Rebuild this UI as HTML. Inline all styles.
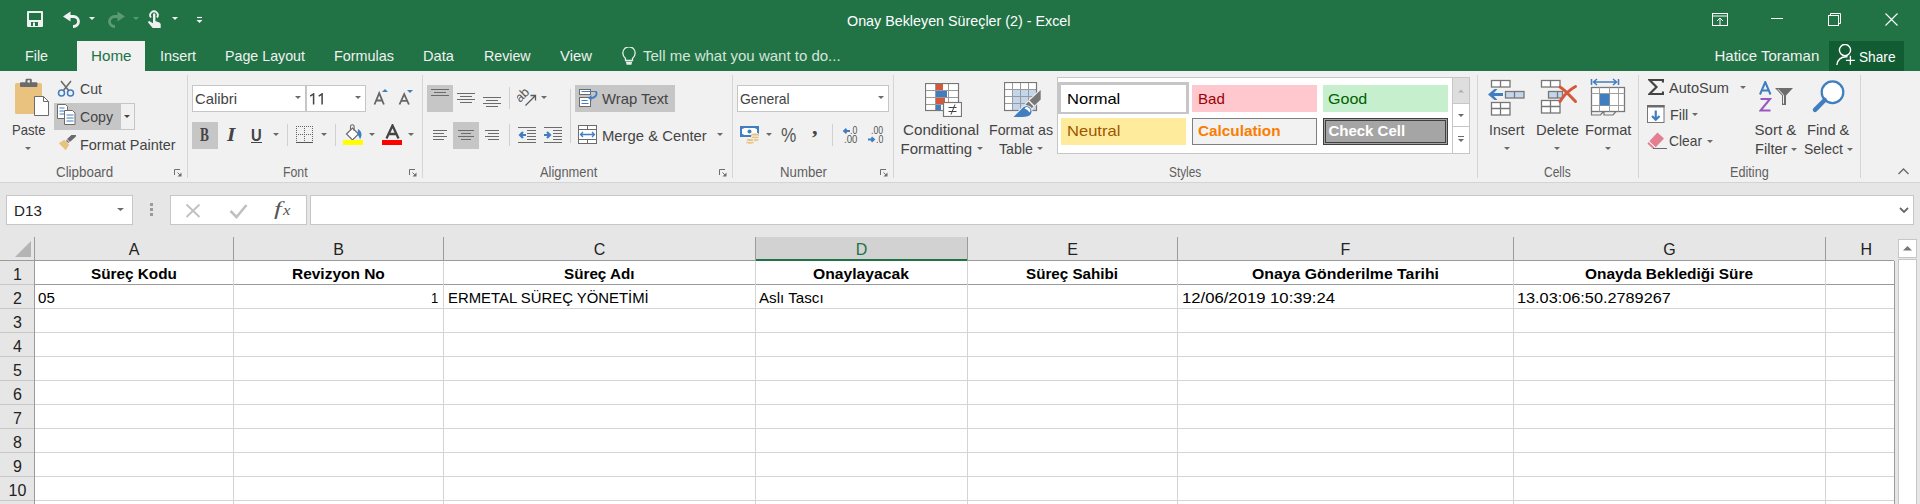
<!DOCTYPE html>
<html><head><meta charset="utf-8"><style>
html,body{margin:0;padding:0}
body{width:1920px;height:504px;overflow:hidden;position:relative;background:#e6e6e6;font-family:"Liberation Sans",sans-serif}
.t{position:absolute;white-space:nowrap;line-height:1;transform-origin:0 0}
.r{position:absolute;display:block}
</style></head><body>
<div class="r" style="left:0px;top:0px;width:1920px;height:71px;background:#217346;"></div>
<svg class="r" style="left:27px;top:11px" width="16" height="16" viewBox="0 0 16 16"><rect x="0" y="0" width="16" height="16" rx="1" fill="#f0f0f0"/><rect x="2" y="2" width="12" height="7" fill="#217346"/><rect x="4" y="11" width="7" height="4" fill="#217346"/><rect x="6" y="11.5" width="2" height="3.5" fill="#f0f0f0"/></svg>
<svg class="r" style="left:62px;top:11px" width="20" height="17" viewBox="0 0 20 17"><path d="M4 5.5h7.5a5 5 0 0 1 0 10h-0.5" fill="none" stroke="#f0f0f0" stroke-width="2.8"/><path d="M1 5.5L8.5 0.5V10.5z" fill="#f0f0f0"/></svg>
<svg class="r" style="left:89px;top:17px" width="6" height="3" viewBox="0 0 6 3"><path d="M0 0h6l-3.0 3z" fill="#f3f3f3"/></svg>
<svg class="r" style="left:106px;top:11px" width="20" height="17" viewBox="0 0 20 17"><path d="M16 5.5H8.5a5 5 0 0 0 0 10h0.5" fill="none" stroke="#5a9a74" stroke-width="2.8"/><path d="M19 5.5L11.5 0.5V10.5z" fill="#5a9a74"/></svg>
<svg class="r" style="left:133px;top:17px" width="6" height="3" viewBox="0 0 6 3"><path d="M0 0h6l-3.0 3z" fill="#5a9a74"/></svg>
<svg class="r" style="left:147px;top:8px" width="15" height="20" viewBox="0 0 15 20"><path d="M4 9.5a3.8 3.8 0 1 1 6 0" fill="none" stroke="#f0f0f0" stroke-width="1.8"/><path d="M6 6.5a1.2 1.2 0 0 1 2.4 0v6.5l4.5 1.8 0.8 1.5v3.7h-8l-5-6 1.5-1 3.8 2.2z" fill="#f0f0f0"/></svg>
<svg class="r" style="left:172px;top:17px" width="6" height="3" viewBox="0 0 6 3"><path d="M0 0h6l-3.0 3z" fill="#f3f3f3"/></svg>
<svg class="r" style="left:196px;top:16px" width="7" height="7" viewBox="0 0 7 7"><path d="M1 1.5h5" stroke="#f3f3f3" stroke-width="1.2"/><path d="M0.5 4h6l-3 3z" fill="#f3f3f3"/></svg>
<div class="t" style="left:847.00px;top:13.00px;font-size:15px;color:#ffffff;transform:scaleX(0.9541);">Onay Bekleyen Süreçler (2) - Excel</div>
<svg class="r" style="left:1712px;top:13px" width="16" height="13" viewBox="0 0 16 13"><rect x="0.5" y="0.5" width="15" height="12" fill="none" stroke="#fff"/><path d="M0.5 3h15" stroke="#fff"/><path d="M8 12.5V5M5 8l3-3 3 3" fill="none" stroke="#fff"/></svg>
<div class="r" style="left:1771px;top:18px;width:12px;height:1px;background:#fff;"></div>
<svg class="r" style="left:1828px;top:13px" width="13" height="13" viewBox="0 0 13 13"><rect x="0.5" y="2.5" width="10" height="10" fill="none" stroke="#fff"/><path d="M2.5 2.5v-2h10v10h-2" fill="none" stroke="#fff"/></svg>
<svg class="r" style="left:1885px;top:13px" width="13" height="13" viewBox="0 0 13 13"><path d="M0.5 0.5l12 12M12.5 0.5l-12 12" stroke="#fff" stroke-width="1.1"/></svg>
<div class="r" style="left:77px;top:41px;width:68px;height:30px;background:#f1f1f1;"></div>
<div class="t" style="left:25.00px;top:48.00px;font-size:15px;color:#f1f1f1;transform:scaleX(0.9524);">File</div>
<div class="t" style="left:90.50px;top:48.00px;font-size:15px;color:#217346;transform:scaleX(1.0125);">Home</div>
<div class="t" style="left:160.00px;top:48.00px;font-size:15px;color:#f1f1f1;transform:scaleX(0.9600);">Insert</div>
<div class="t" style="left:225.00px;top:48.00px;font-size:15px;color:#f1f1f1;transform:scaleX(0.9496);">Page Layout</div>
<div class="t" style="left:334.20px;top:48.00px;font-size:15px;color:#f1f1f1;transform:scaleX(0.9600);">Formulas</div>
<div class="t" style="left:423.30px;top:48.00px;font-size:15px;color:#f1f1f1;transform:scaleX(0.9748);">Data</div>
<div class="t" style="left:484.20px;top:48.00px;font-size:15px;color:#f1f1f1;transform:scaleX(0.9462);">Review</div>
<div class="t" style="left:560.00px;top:48.00px;font-size:15px;color:#f1f1f1;transform:scaleX(0.9907);">View</div>
<svg class="r" style="left:622px;top:47px" width="14" height="18" viewBox="0 0 14 18"><path d="M3.5 11.5C1.5 9.5 0.8 8 0.8 6A6.2 6.2 0 0 1 13.2 6c0 2-0.7 3.5-2.7 5.5v2h-7z" fill="none" stroke="#e8efe9" stroke-width="1.3"/><path d="M4 15.5h6M4.5 17h5" stroke="#e8efe9" stroke-width="1.3"/></svg>
<div class="t" style="left:643.00px;top:48.00px;font-size:15px;color:#d5e4da;">Tell me what you want to do...</div>
<div class="t" style="left:1714.50px;top:48.00px;font-size:15px;color:#f1f1f1;">Hatice Toraman</div>
<div class="r" style="left:1829px;top:41px;width:75px;height:30px;background:#125c34;"></div>
<svg class="r" style="left:1836px;top:44px" width="22" height="22" viewBox="0 0 22 22"><circle cx="9" cy="6.1" r="5.6" fill="none" stroke="#fff" stroke-width="1.4"/><path d="M0.8 21C1.5 16 5 12.5 11.5 12.8" fill="none" stroke="#fff" stroke-width="1.4"/><path d="M14.4 11.8v9M9.9 16.3h9" stroke="#fff" stroke-width="1.3"/></svg>
<div class="t" style="left:1859.00px;top:50.00px;font-size:14.5px;color:#ffffff;transform:scaleX(0.9432);">Share</div>
<div class="r" style="left:0px;top:71px;width:1920px;height:111px;background:#f1f1f1;"></div>
<div class="r" style="left:0px;top:182px;width:1920px;height:1px;background:#d4d4d4;"></div>
<div class="r" style="left:187px;top:75px;width:1px;height:103px;background:#d5d5d5;"></div>
<div class="r" style="left:422px;top:75px;width:1px;height:103px;background:#d5d5d5;"></div>
<div class="r" style="left:732px;top:75px;width:1px;height:103px;background:#d5d5d5;"></div>
<div class="r" style="left:893px;top:75px;width:1px;height:103px;background:#d5d5d5;"></div>
<div class="r" style="left:1477px;top:75px;width:1px;height:103px;background:#d5d5d5;"></div>
<div class="r" style="left:1638px;top:75px;width:1px;height:103px;background:#d5d5d5;"></div>
<div class="r" style="left:1860px;top:75px;width:1px;height:103px;background:#d5d5d5;"></div>
<svg class="r" style="left:14px;top:78px" width="36" height="39" viewBox="0 0 36 39"><rect x="1" y="5" width="27" height="31" rx="1.5" fill="#e9c27f"/><rect x="6" y="4.3" width="17.4" height="4.8" rx="1" fill="#6b6b6b"/><rect x="11.5" y="0.8" width="6.3" height="5" rx="1.2" fill="#6b6b6b"/><rect x="13.6" y="2.3" width="2.2" height="2.2" fill="#fff"/><path d="M20.5 18.5h9l5 5v14h-14z" fill="#fff" stroke="#6b6b6b"/><path d="M29.5 18.5v5h5" fill="none" stroke="#6b6b6b"/></svg>
<div class="t" style="left:12.40px;top:122.00px;font-size:15px;color:#444444;transform:scaleX(0.8709);">Paste</div>
<svg class="r" style="left:25px;top:147px" width="6" height="3" viewBox="0 0 6 3"><path d="M0 0h6l-3.0 3z" fill="#6a6a6a"/></svg>
<svg class="r" style="left:57px;top:80px" width="18" height="17" viewBox="0 0 18 17"><path d="M4 1l8 10M14 1l-8 10" stroke="#6b6b6b" stroke-width="1.6"/><circle cx="4.5" cy="13" r="3" fill="none" stroke="#417ebf" stroke-width="1.5"/><circle cx="13.5" cy="13" r="3" fill="none" stroke="#417ebf" stroke-width="1.5"/></svg>
<div class="t" style="left:80.00px;top:81.00px;font-size:15px;color:#444444;transform:scaleX(0.9422);">Cut</div>
<div class="r" style="left:54px;top:103px;width:67px;height:27px;background:#c6c6c6;"></div>
<div class="r" style="left:120px;top:103px;width:15px;height:27px;background:#f1f1f1;border:1px solid #c6c6c6;box-sizing:border-box;"></div>
<svg class="r" style="left:124px;top:115px" width="6" height="3" viewBox="0 0 6 3"><path d="M0 0h6l-3.0 3z" fill="#444"/></svg>
<svg class="r" style="left:57px;top:104px" width="19" height="21" viewBox="0 0 19 21"><path d="M0.5 0.5h8l2 2v12h-10z" fill="#fff" stroke="#6b6b6b"/><path d="M2.5 4h5M2.5 7h5M2.5 10h5" stroke="#417ebf"/><path d="M7.5 6.5h8l2.5 2.5v11.5h-10.5z" fill="#fff" stroke="#6b6b6b"/><path d="M9.5 11h7M9.5 14h7M9.5 17h7" stroke="#417ebf"/></svg>
<div class="t" style="left:80.00px;top:109.00px;font-size:15px;color:#444444;transform:scaleX(0.9429);">Copy</div>
<svg class="r" style="left:58px;top:135px" width="18" height="17" viewBox="0 0 18 17"><path d="M10.5 5.5L16 0.5" stroke="#6b6b6b" stroke-width="4.2" stroke-linecap="round"/><path d="M6.2 4.8L11.2 9.8 7.7 15.2 0.8 8.3z" fill="#e9c27f"/><path d="M8 3.5l5 5" stroke="#f3f3f3" stroke-width="1"/></svg>
<div class="t" style="left:80.00px;top:137.00px;font-size:15px;color:#444444;transform:scaleX(0.9637);">Format Painter</div>
<div class="t" style="left:55.60px;top:165.00px;font-size:14px;color:#5f5f5f;transform:scaleX(0.9549);">Clipboard</div>
<svg class="r" style="left:174px;top:169px" width="8" height="8" viewBox="0 0 8 8"><path d="M0.5 6V0.5H6" fill="none" stroke="#6e6e6e"/><path d="M3.5 3.5L7 7" stroke="#6e6e6e"/><path d="M7.5 3.5V7.5H3.5z" fill="#6e6e6e"/></svg>
<div class="r" style="left:192px;top:85px;width:114px;height:27px;background:#fff;border:1px solid #c6c6c6;box-sizing:border-box;"></div>
<div class="r" style="left:306px;top:85px;width:60px;height:27px;background:#fff;border:1px solid #c6c6c6;box-sizing:border-box;"></div>
<div class="t" style="left:195.30px;top:91.00px;font-size:15px;color:#444444;transform:scaleX(0.9906);">Calibri</div>
<svg class="r" style="left:295px;top:96px" width="6" height="3" viewBox="0 0 6 3"><path d="M0 0h6l-3.0 3z" fill="#6a6a6a"/></svg>
<svg class="r" style="left:309px;top:93px" width="16" height="12" viewBox="0 0 16 12"><path d="M1.2 3.2L4.6 0.9V11.5M9.7 3.2L13.1 0.9V11.5" fill="none" stroke="#444" stroke-width="1.5"/></svg>
<svg class="r" style="left:355px;top:96px" width="6" height="3" viewBox="0 0 6 3"><path d="M0 0h6l-3.0 3z" fill="#6a6a6a"/></svg>
<svg class="r" style="left:373px;top:88px" width="16" height="17" viewBox="0 0 16 17"><path d="M1.5 16.5L6.2 5.2 10.9 16.5M3.4 12.5h5.6" fill="none" stroke="#666" stroke-width="1.8"/><path d="M9 4l3-3 3 3z" fill="#417ebf"/></svg>
<svg class="r" style="left:398px;top:89px" width="16" height="16" viewBox="0 0 16 16"><path d="M1.5 15.5L6.2 5.2 10.9 15.5M3.4 11.8h5.6" fill="none" stroke="#666" stroke-width="1.8"/><path d="M9 1l3 3 3-3z" fill="#417ebf"/></svg>
<div class="r" style="left:192px;top:122px;width:26px;height:27px;background:#c6c6c6;"></div>
<div class="t" style="left:199.80px;top:126.00px;font-size:18px;color:#444;font-family:'Liberation Serif',serif;font-weight:bold;font-style:normal;transform:scaleX(0.7417);">B</div>
<div class="t" style="left:227.04px;top:126.00px;font-size:18px;color:#444;font-family:'Liberation Serif',serif;font-weight:bold;font-style:italic;transform:scaleX(1.1871);">I</div>
<div class="t" style="left:251.30px;top:127.00px;font-size:17px;color:#444;font-family:'Liberation Sans',sans-serif;font-weight:bold;font-style:normal;transform:scaleX(0.8699);">U</div>
<div class="r" style="left:251px;top:142px;width:11px;height:1.3px;background:#444;"></div>
<svg class="r" style="left:273px;top:133px" width="6" height="3" viewBox="0 0 6 3"><path d="M0 0h6l-3.0 3z" fill="#6a6a6a"/></svg>
<div class="r" style="left:287px;top:124px;width:1px;height:22px;background:#d0d0d0;"></div>
<svg class="r" style="left:296px;top:126px" width="18" height="17" viewBox="0 0 18 17"><g fill="#666"><rect x="0" y="0" width="1" height="1"/><rect x="0" y="8" width="1" height="1"/><rect x="2" y="0" width="1" height="1"/><rect x="2" y="8" width="1" height="1"/><rect x="4" y="0" width="1" height="1"/><rect x="4" y="8" width="1" height="1"/><rect x="6" y="0" width="1" height="1"/><rect x="6" y="8" width="1" height="1"/><rect x="8" y="0" width="1" height="1"/><rect x="8" y="8" width="1" height="1"/><rect x="10" y="0" width="1" height="1"/><rect x="10" y="8" width="1" height="1"/><rect x="12" y="0" width="1" height="1"/><rect x="12" y="8" width="1" height="1"/><rect x="14" y="0" width="1" height="1"/><rect x="14" y="8" width="1" height="1"/><rect x="16" y="0" width="1" height="1"/><rect x="16" y="8" width="1" height="1"/><rect x="0" y="0" width="1" height="1"/><rect x="0" y="2" width="1" height="1"/><rect x="0" y="4" width="1" height="1"/><rect x="0" y="6" width="1" height="1"/><rect x="0" y="8" width="1" height="1"/><rect x="0" y="10" width="1" height="1"/><rect x="0" y="12" width="1" height="1"/><rect x="0" y="14" width="1" height="1"/><rect x="8" y="0" width="1" height="1"/><rect x="8" y="2" width="1" height="1"/><rect x="8" y="4" width="1" height="1"/><rect x="8" y="6" width="1" height="1"/><rect x="8" y="8" width="1" height="1"/><rect x="8" y="10" width="1" height="1"/><rect x="8" y="12" width="1" height="1"/><rect x="8" y="14" width="1" height="1"/><rect x="16" y="0" width="1" height="1"/><rect x="16" y="2" width="1" height="1"/><rect x="16" y="4" width="1" height="1"/><rect x="16" y="6" width="1" height="1"/><rect x="16" y="8" width="1" height="1"/><rect x="16" y="10" width="1" height="1"/><rect x="16" y="12" width="1" height="1"/><rect x="16" y="14" width="1" height="1"/></g><rect x="0" y="16" width="17" height="1.3" fill="#555"/></svg>
<svg class="r" style="left:321px;top:133px" width="6" height="3" viewBox="0 0 6 3"><path d="M0 0h6l-3.0 3z" fill="#6a6a6a"/></svg>
<div class="r" style="left:335px;top:124px;width:1px;height:22px;background:#d0d0d0;"></div>
<svg class="r" style="left:343px;top:124px" width="20" height="21" viewBox="0 0 20 21"><path d="M3.5 10l6-6 6 6-6 6z" fill="#fff" stroke="#6b6b6b" stroke-width="1.2"/><path d="M7.5 6V2.5a1.8 1.8 0 0 1 3.6 0V7" fill="none" stroke="#6b6b6b" stroke-width="1.1"/><path d="M15 5c2 1 3.5 3 3.5 5.5 0 1.5-0.5 3-1.5 5-0.5-2-1-3-2.5-5z" fill="#417ebf"/><rect x="0" y="16" width="20" height="5" fill="#ffff00"/></svg>
<svg class="r" style="left:369px;top:133px" width="6" height="3" viewBox="0 0 6 3"><path d="M0 0h6l-3.0 3z" fill="#6a6a6a"/></svg>
<svg class="r" style="left:382px;top:124px" width="21" height="22" viewBox="0 0 21 22"><path d="M4.5 14.5L10.5 1.5 16.5 14.5M7 10h7" fill="none" stroke="#444" stroke-width="2.3"/><rect x="0" y="16" width="20" height="5" fill="#ff0000"/></svg>
<svg class="r" style="left:408px;top:133px" width="6" height="3" viewBox="0 0 6 3"><path d="M0 0h6l-3.0 3z" fill="#6a6a6a"/></svg>
<div class="t" style="left:283.20px;top:165.00px;font-size:14px;color:#5f5f5f;transform:scaleX(0.8786);">Font</div>
<svg class="r" style="left:409px;top:169px" width="8" height="8" viewBox="0 0 8 8"><path d="M0.5 6V0.5H6" fill="none" stroke="#6e6e6e"/><path d="M3.5 3.5L7 7" stroke="#6e6e6e"/><path d="M7.5 3.5V7.5H3.5z" fill="#6e6e6e"/></svg>
<div class="r" style="left:427px;top:85px;width:26px;height:27px;background:#c6c6c6;"></div>
<div class="r" style="left:431px;top:89px;width:18px;height:1px;background:#6b6b6b;"></div>
<div class="r" style="left:434px;top:92px;width:12px;height:1px;background:#6b6b6b;"></div>
<div class="r" style="left:431px;top:95px;width:18px;height:1px;background:#6b6b6b;"></div>
<div class="r" style="left:457px;top:93px;width:18px;height:1px;background:#6b6b6b;"></div>
<div class="r" style="left:460px;top:96px;width:12px;height:1px;background:#6b6b6b;"></div>
<div class="r" style="left:457px;top:99px;width:18px;height:1px;background:#6b6b6b;"></div>
<div class="r" style="left:460px;top:102px;width:12px;height:1px;background:#6b6b6b;"></div>
<div class="r" style="left:483px;top:97px;width:18px;height:1px;background:#6b6b6b;"></div>
<div class="r" style="left:486px;top:100px;width:12px;height:1px;background:#6b6b6b;"></div>
<div class="r" style="left:483px;top:103px;width:18px;height:1px;background:#6b6b6b;"></div>
<div class="r" style="left:486px;top:106px;width:12px;height:1px;background:#6b6b6b;"></div>
<div class="r" style="left:509px;top:87px;width:1px;height:22px;background:#d0d0d0;"></div>
<svg class="r" style="left:517px;top:89px" width="20" height="18" viewBox="0 0 20 18"><text x="0" y="0" transform="translate(3,14) rotate(-45)" font-family="Liberation Sans" font-size="13" fill="#5a5a5a">ab</text><path d="M8.5 16.5L18.5 6.5M13.5 6.5h5v5" fill="none" stroke="#5a5a5a" stroke-width="1.3"/></svg>
<svg class="r" style="left:541px;top:96px" width="6" height="3" viewBox="0 0 6 3"><path d="M0 0h6l-3.0 3z" fill="#6a6a6a"/></svg>
<div class="r" style="left:570px;top:89px;width:1px;height:54px;background:#d0d0d0;"></div>
<div class="r" style="left:575px;top:85px;width:100px;height:27px;background:#c6c6c6;"></div>
<svg class="r" style="left:579px;top:89px" width="19" height="18" viewBox="0 0 19 18"><rect x="0.5" y="0.5" width="11" height="5" fill="#fff" stroke="#6b6b6b"/><rect x="0.5" y="8.5" width="11" height="9" fill="#fff" stroke="#6b6b6b"/><path d="M2.5 2.5h15M2.5 11.5h6M2.5 14.5h7" stroke="#417ebf" stroke-width="1"/><path d="M17 2.5c1.5 3-0.5 6.5-5 6.5" fill="none" stroke="#417ebf" stroke-width="1.8"/><path d="M9 9l3.5-3v6z" fill="#417ebf"/></svg>
<div class="t" style="left:601.60px;top:91.00px;font-size:15px;color:#444444;transform:scaleX(0.9888);">Wrap Text</div>
<div class="r" style="left:433px;top:130px;width:14px;height:1px;background:#6b6b6b;"></div>
<div class="r" style="left:433px;top:133px;width:11px;height:1px;background:#6b6b6b;"></div>
<div class="r" style="left:433px;top:136px;width:14px;height:1px;background:#6b6b6b;"></div>
<div class="r" style="left:433px;top:139px;width:11px;height:1px;background:#6b6b6b;"></div>
<div class="r" style="left:453px;top:122px;width:26px;height:27px;background:#c6c6c6;"></div>
<div class="r" style="left:458px;top:130px;width:16px;height:1px;background:#6b6b6b;"></div>
<div class="r" style="left:461px;top:133px;width:10px;height:1px;background:#6b6b6b;"></div>
<div class="r" style="left:458px;top:136px;width:16px;height:1px;background:#6b6b6b;"></div>
<div class="r" style="left:461px;top:139px;width:10px;height:1px;background:#6b6b6b;"></div>
<div class="r" style="left:485px;top:130px;width:14px;height:1px;background:#6b6b6b;"></div>
<div class="r" style="left:488px;top:133px;width:11px;height:1px;background:#6b6b6b;"></div>
<div class="r" style="left:485px;top:136px;width:14px;height:1px;background:#6b6b6b;"></div>
<div class="r" style="left:488px;top:139px;width:11px;height:1px;background:#6b6b6b;"></div>
<div class="r" style="left:509px;top:124px;width:1px;height:22px;background:#d0d0d0;"></div>
<svg class="r" style="left:518px;top:127px" width="18" height="16" viewBox="0 0 18 16"><path d="M0 0.5h18M9 3.5h9M9 6.5h9M9 9.5h9M9 12.5h9M0 15.5h18" stroke="#6b6b6b"/><path d="M8 8H2M5 5L2 8l3 3" fill="none" stroke="#417ebf" stroke-width="2.2"/></svg>
<svg class="r" style="left:544px;top:127px" width="18" height="16" viewBox="0 0 18 16"><path d="M0 0.5h18M9 3.5h9M9 6.5h9M9 9.5h9M9 12.5h9M0 15.5h18" stroke="#6b6b6b"/><path d="M0 8h6M3 5l3 3-3 3" fill="none" stroke="#417ebf" stroke-width="2.2"/></svg>
<svg class="r" style="left:578px;top:125px" width="19" height="19" viewBox="0 0 19 19"><rect x="0.5" y="0.5" width="18" height="18" fill="#fff" stroke="#6b6b6b"/><path d="M0.5 4.5h18M0.5 14.5h18M9.5 0.5v4M9.5 14.5v4" stroke="#6b6b6b"/><path d="M2.5 9.5h14M5 7L2.5 9.5 5 12M14 7l2.5 2.5L14 12" fill="none" stroke="#417ebf" stroke-width="1.3"/></svg>
<div class="t" style="left:601.60px;top:128.00px;font-size:15px;color:#444444;transform:scaleX(0.9896);">Merge &amp; Center</div>
<svg class="r" style="left:717px;top:133px" width="6" height="3" viewBox="0 0 6 3"><path d="M0 0h6l-3.0 3z" fill="#6a6a6a"/></svg>
<div class="t" style="left:539.60px;top:165.00px;font-size:14px;color:#5f5f5f;transform:scaleX(0.9189);">Alignment</div>
<svg class="r" style="left:719px;top:169px" width="8" height="8" viewBox="0 0 8 8"><path d="M0.5 6V0.5H6" fill="none" stroke="#6e6e6e"/><path d="M3.5 3.5L7 7" stroke="#6e6e6e"/><path d="M7.5 3.5V7.5H3.5z" fill="#6e6e6e"/></svg>
<div class="r" style="left:737px;top:85px;width:152px;height:27px;background:#fff;border:1px solid #c6c6c6;box-sizing:border-box;"></div>
<div class="t" style="left:740.30px;top:91.00px;font-size:15px;color:#444444;transform:scaleX(0.9316);">General</div>
<svg class="r" style="left:878px;top:96px" width="6" height="3" viewBox="0 0 6 3"><path d="M0 0h6l-3.0 3z" fill="#6a6a6a"/></svg>
<svg class="r" style="left:740px;top:126px" width="20" height="19" viewBox="0 0 20 19"><rect x="0" y="0" width="19" height="11" fill="#417ebf"/><path d="M2 3c1.5 0 2-1 2-1h11s0.5 1 2 1v5c-1.5 0-2 1-2 1H4s-0.5-1-2-1z" fill="#fff"/><circle cx="9.5" cy="5.5" r="2" fill="#417ebf"/><g fill="#e9c27f" stroke="#f1f1f1" stroke-width="0.9"><ellipse cx="15" cy="13.8" rx="4" ry="1.6"/><ellipse cx="15" cy="11.2" rx="4" ry="1.6"/><ellipse cx="15" cy="8.6" rx="4" ry="1.6"/><ellipse cx="10" cy="16.6" rx="4" ry="1.6"/><ellipse cx="10" cy="14" rx="4" ry="1.6"/></g></svg>
<svg class="r" style="left:766px;top:133px" width="6" height="3" viewBox="0 0 6 3"><path d="M0 0h6l-3.0 3z" fill="#6a6a6a"/></svg>
<div class="t" style="left:781.00px;top:126.00px;font-size:19.5px;color:#555;transform:scaleX(0.8818);">%</div>
<div class="t" style="left:811.70px;top:117.00px;font-size:20px;color:#444;font-family:'Liberation Serif',serif;font-weight:bold;font-style:normal;transform:scaleX(1.1200);">,</div>
<div class="r" style="left:832px;top:124px;width:1px;height:22px;background:#d0d0d0;"></div>
<svg class="r" style="left:842px;top:128px" width="8" height="6" viewBox="0 0 8 6"><path d="M8 3H2.5M4.5 0.8L2 3l2.5 2.2" fill="none" stroke="#417ebf" stroke-width="1.8"/></svg>
<div class="t" style="left:849.60px;top:126.00px;font-size:10px;color:#555;transform:scaleX(0.8743);">.0</div>
<div class="t" style="left:843.60px;top:135.00px;font-size:10px;color:#555;transform:scaleX(0.9568);">.00</div>
<div class="t" style="left:871.00px;top:126.00px;font-size:10px;color:#555;transform:scaleX(0.8705);">.00</div>
<svg class="r" style="left:868px;top:136px" width="8" height="7" viewBox="0 0 8 7"><path d="M0 3.5h5.5M3.5 1.3L6 3.5 3.5 5.7" fill="none" stroke="#417ebf" stroke-width="1.8"/></svg>
<div class="t" style="left:875.80px;top:135.00px;font-size:10px;color:#555;transform:scaleX(0.8743);">.0</div>
<div class="t" style="left:779.70px;top:165.00px;font-size:14px;color:#5f5f5f;transform:scaleX(0.9438);">Number</div>
<svg class="r" style="left:880px;top:169px" width="8" height="8" viewBox="0 0 8 8"><path d="M0.5 6V0.5H6" fill="none" stroke="#6e6e6e"/><path d="M3.5 3.5L7 7" stroke="#6e6e6e"/><path d="M7.5 3.5V7.5H3.5z" fill="#6e6e6e"/></svg>
<svg class="r" style="left:925px;top:83px" width="37" height="34" viewBox="0 0 37 34"><rect x="0.5" y="0.5" width="33" height="27" fill="#fff"/><rect x="10.5" y="1" width="7.5" height="6" fill="#d6573a"/><rect x="10.5" y="8" width="11.5" height="6" fill="#417ebf"/><rect x="10.5" y="15" width="9.5" height="6" fill="#d6573a"/><rect x="10.5" y="22" width="5.5" height="5.5" fill="#417ebf"/><path d="M10.5 0.5v27M23.5 0.5v27M0.5 7.5h33M0.5 14.5h33M0.5 21.5h33" stroke="#9a9a9a" stroke-width="1"/><rect x="0.5" y="0.5" width="33" height="27" fill="none" stroke="#777777" stroke-width="1.2"/><rect x="18.5" y="19.5" width="18" height="14" fill="#fff" stroke="#777777" stroke-width="1.2"/><path d="M23.5 24.5h8M23.5 28.5h8M30 21.5l-4 10" stroke="#444" stroke-width="1"/></svg>
<div class="t" style="left:903.00px;top:122.00px;font-size:15px;color:#444444;transform:scaleX(1.0127);">Conditional</div>
<div class="t" style="left:900.50px;top:141.00px;font-size:15px;color:#444444;">Formatting</div>
<svg class="r" style="left:977px;top:147px" width="6" height="3" viewBox="0 0 6 3"><path d="M0 0h6l-3.0 3z" fill="#6a6a6a"/></svg>
<svg class="r" style="left:1004px;top:82px" width="38" height="36" viewBox="0 0 38 36"><rect x="0.5" y="0.5" width="32" height="28" fill="#fff"/><rect x="8.5" y="7.5" width="24" height="21" fill="#c3d6eb"/><path d="M8.5 0.5v28M16.5 0.5v28M24.5 0.5v28M0.5 7.5h32M0.5 14.5h32M0.5 21.5h32" stroke="#9a9a9a"/><rect x="0.5" y="0.5" width="32" height="28" fill="none" stroke="#777777" stroke-width="1.2"/><g stroke="#f1f1f1" stroke-width="2" paint-order="stroke" stroke-linejoin="round"><path d="M36.7 8V17.5L30.5 23.5 25.5 18.5z" fill="#777777"/><path d="M24.5 19.5L29.5 24.5 26.5 27.5 21.5 22.5z" fill="#777777"/><path d="M9.5 35L18 26.5A5.2 5.2 0 1 1 25.5 33.5Q22 35.5 9.5 35z" fill="#417ebf"/></g><path d="M20.5 26.5A3 3 0 0 1 25.5 30.5Q24.5 28 20.5 26.5z" fill="#fff"/></svg>
<div class="t" style="left:988.60px;top:122.00px;font-size:15px;color:#444444;transform:scaleX(0.9481);">Format as</div>
<div class="t" style="left:999.00px;top:141.00px;font-size:15px;color:#444444;transform:scaleX(0.9484);">Table</div>
<svg class="r" style="left:1037px;top:147px" width="6" height="3" viewBox="0 0 6 3"><path d="M0 0h6l-3.0 3z" fill="#6a6a6a"/></svg>
<div class="r" style="left:1057px;top:77px;width:413px;height:77px;background:#fff;border:1px solid #c6c6c6;box-sizing:border-box;"></div>
<div class="r" style="left:1058px;top:82px;width:131px;height:32px;background:#c6c6c6;"></div>
<div class="r" style="left:1061px;top:85px;width:125px;height:27px;background:#fff;"></div>
<div class="t" style="left:1067.00px;top:91.00px;font-size:15px;color:#000000;transform:scaleX(1.1024);">Normal</div>
<div class="r" style="left:1192px;top:85px;width:125px;height:27px;background:#ffc7ce;"></div>
<div class="t" style="left:1197.70px;top:91.00px;font-size:15px;color:#9c0006;transform:scaleX(1.0075);">Bad</div>
<div class="r" style="left:1323px;top:85px;width:125px;height:27px;background:#c6efce;"></div>
<div class="t" style="left:1328.40px;top:91.00px;font-size:15px;color:#006100;transform:scaleX(1.0708);">Good</div>
<div class="r" style="left:1061px;top:118px;width:125px;height:27px;background:#ffeb9c;"></div>
<div class="t" style="left:1067.00px;top:123.00px;font-size:15px;color:#9c5700;transform:scaleX(1.1024);">Neutral</div>
<div class="r" style="left:1192px;top:118px;width:125px;height:27px;background:#f2f2f2;border:1px solid #7f7f7f;box-sizing:border-box;"></div>
<div class="t" style="left:1197.70px;top:123.00px;font-size:15px;color:#fa7d00;font-family:'Liberation Sans',sans-serif;font-weight:bold;font-style:normal;transform:scaleX(1.0204);">Calculation</div>
<div class="r" style="left:1323px;top:118px;width:125px;height:27px;background:#a5a5a5;border:3px double #3f3f3f;box-sizing:border-box;"></div>
<div class="t" style="left:1328.40px;top:123.00px;font-size:15px;color:#ffffff;font-family:'Liberation Sans',sans-serif;font-weight:bold;font-style:normal;">Check Cell</div>
<div class="r" style="left:1452px;top:77px;width:18px;height:77px;background:#fff;border:1px solid #c6c6c6;box-sizing:border-box;"></div>
<div class="r" style="left:1453px;top:78px;width:16px;height:25px;background:#dedede;"></div>
<div class="r" style="left:1452px;top:103px;width:18px;height:1px;background:#c6c6c6;"></div>
<div class="r" style="left:1452px;top:126px;width:18px;height:1px;background:#c6c6c6;"></div>
<svg class="r" style="left:1458px;top:89px" width="7" height="4" viewBox="0 0 7 4"><path d="M0 3.5h6L3 0.5z" fill="#b0b0b0"/></svg>
<svg class="r" style="left:1458px;top:114px" width="6" height="3" viewBox="0 0 6 3"><path d="M0 0h6l-3.0 3z" fill="#6a6a6a"/></svg>
<svg class="r" style="left:1458px;top:136px" width="7" height="8" viewBox="0 0 7 8"><path d="M0 0.5h6" stroke="#6a6a6a"/><path d="M0 3h6l-3 3z" fill="#6a6a6a"/></svg>
<div class="t" style="left:1169.00px;top:165.00px;font-size:14px;color:#5f5f5f;transform:scaleX(0.8451);">Styles</div>
<svg class="r" style="left:1487px;top:79px" width="38" height="37" viewBox="0 0 38 37"><g fill="#fff" stroke="#777777" stroke-width="1.3"><rect x="4.5" y="1.5" width="18.5" height="6.5"/><rect x="4.5" y="23.5" width="18.5" height="12.5"/></g><path d="M13.5 1.5v6.5M13.5 23.5v12.5M4.5 29.5h18.5" stroke="#777777" stroke-width="1.3"/><rect x="18.5" y="12.5" width="18.5" height="6.5" fill="#c3d6eb" stroke="#777777" stroke-width="1.3"/><path d="M27.5 12.5v6.5" stroke="#777777" stroke-width="1.3"/><path d="M16 15.5H5" stroke="#417ebf" stroke-width="3"/><path d="M1 15.5L7.5 10h3l-5 5.5 5 5.5h-3z" fill="#417ebf"/></svg>
<div class="t" style="left:1489.20px;top:122.00px;font-size:15px;color:#444444;transform:scaleX(0.9413);">Insert</div>
<svg class="r" style="left:1504px;top:147px" width="6" height="3" viewBox="0 0 6 3"><path d="M0 0h6l-3.0 3z" fill="#6a6a6a"/></svg>
<svg class="r" style="left:1540px;top:79px" width="38" height="36" viewBox="0 0 38 36"><g fill="#fff" stroke="#777777" stroke-width="1.3"><rect x="1.5" y="1.5" width="18.5" height="6.5"/><rect x="1.5" y="21.5" width="18.5" height="12.5"/></g><path d="M10.5 1.5v6.5M10.5 21.5v12.5M1.5 27.5h18.5" stroke="#777777" stroke-width="1.3"/><rect x="8.5" y="12.5" width="14" height="6.5" fill="#c3d6eb" stroke="#777777" stroke-width="1.3"/><path d="M17.5 12.5v6.5" stroke="#777777" stroke-width="1.3"/><path d="M20 8c5 3 10 9 15.5 14.5M35.5 7.5C29 11 24 16 20 22.5" fill="none" stroke="#d6573a" stroke-width="3" stroke-linecap="round"/></svg>
<div class="t" style="left:1535.50px;top:122.00px;font-size:15px;color:#444444;transform:scaleX(0.9896);">Delete</div>
<svg class="r" style="left:1554px;top:147px" width="6" height="3" viewBox="0 0 6 3"><path d="M0 0h6l-3.0 3z" fill="#6a6a6a"/></svg>
<svg class="r" style="left:1590px;top:78px" width="36" height="38" viewBox="0 0 36 38"><path d="M1.5 1v6M28.5 1v6M3 4h24M7 1L3.5 4 7 7M23 1l3.5 3L23 7" fill="none" stroke="#417ebf" stroke-width="1.5"/><rect x="1.5" y="9.5" width="33" height="24" fill="#fff" stroke="#777777" stroke-width="1.3"/><path d="M9.5 9.5v24M19.5 9.5v24M28.5 9.5v24M1.5 15.5h33M1.5 27.5h33" stroke="#a0a0a0"/><rect x="10" y="16" width="9.5" height="11.5" fill="#417ebf"/><path d="M1.5 33.5v3.5h9l3-3.5M14 33.5v3.5h9l3-3.5" fill="none" stroke="#777777" stroke-width="1.2"/></svg>
<div class="t" style="left:1584.60px;top:122.00px;font-size:15px;color:#444444;transform:scaleX(0.9768);">Format</div>
<svg class="r" style="left:1605px;top:147px" width="6" height="3" viewBox="0 0 6 3"><path d="M0 0h6l-3.0 3z" fill="#6a6a6a"/></svg>
<div class="t" style="left:1544.20px;top:165.00px;font-size:14px;color:#5f5f5f;transform:scaleX(0.8553);">Cells</div>
<svg class="r" style="left:1648px;top:79px" width="16" height="16" viewBox="0 0 16 16"><path d="M15 3.5V1H1.5l7 7-7 7H15v-2.5" fill="none" stroke="#444" stroke-width="2.2" stroke-linejoin="miter"/></svg>
<div class="t" style="left:1669.00px;top:80.00px;font-size:15px;color:#444444;transform:scaleX(0.9724);">AutoSum</div>
<svg class="r" style="left:1740px;top:86px" width="6" height="3" viewBox="0 0 6 3"><path d="M0 0h6l-3.0 3z" fill="#6a6a6a"/></svg>
<svg class="r" style="left:1647px;top:105px" width="18" height="18" viewBox="0 0 18 18"><rect x="0.5" y="0.5" width="16.5" height="17" fill="#fff" stroke="#777777"/><rect x="0" y="0" width="17.5" height="2.5" fill="#6b6b6b"/><path d="M8.75 5.5v9M5 11l3.75 3.75L12.5 11" fill="none" stroke="#417ebf" stroke-width="2.2"/></svg>
<div class="t" style="left:1669.60px;top:107.00px;font-size:15px;color:#444444;transform:scaleX(0.9504);">Fill</div>
<svg class="r" style="left:1692px;top:113px" width="6" height="3" viewBox="0 0 6 3"><path d="M0 0h6l-3.0 3z" fill="#6a6a6a"/></svg>
<svg class="r" style="left:1647px;top:131px" width="20" height="18" viewBox="0 0 20 18"><path d="M10.5 1.5l6.5 6-8.5 9-6.5-6z" fill="#e47f92"/><path d="M2 10.5l6.5 6" stroke="#fff" stroke-width="1" /><path d="M1.5 11l6 5.5-1.5 1.2-5.5-5z" fill="#e47f92"/><path d="M6 17.5h14" stroke="#6b6b6b" stroke-width="1"/></svg>
<div class="t" style="left:1669.00px;top:133.00px;font-size:15px;color:#444444;transform:scaleX(0.9205);">Clear</div>
<svg class="r" style="left:1707px;top:140px" width="6" height="3" viewBox="0 0 6 3"><path d="M0 0h6l-3.0 3z" fill="#6a6a6a"/></svg>
<svg class="r" style="left:1759px;top:81px" width="13" height="31" viewBox="0 0 13 31"><path d="M1 13.5L6.25 1 11.5 13.5M3 9.5h6.5" fill="none" stroke="#417ebf" stroke-width="2"/><path d="M1.5 18h9.5L1.5 29.5h10" fill="none" stroke="#9b57c0" stroke-width="2"/></svg>
<svg class="r" style="left:1775px;top:88px" width="19" height="17" viewBox="0 0 19 17"><path d="M0 0h18l-7 7.5V17h-4V7.5z" fill="#6d6d6d"/><path d="M3 1.2l5.5 6v8.5" fill="none" stroke="#fff" stroke-width="0.9"/></svg>
<div class="t" style="left:1754.60px;top:122.00px;font-size:15px;color:#444444;">Sort &amp;</div>
<div class="t" style="left:1754.60px;top:141.00px;font-size:15px;color:#444444;transform:scaleX(0.9715);">Filter</div>
<svg class="r" style="left:1791px;top:148px" width="6" height="3" viewBox="0 0 6 3"><path d="M0 0h6l-3.0 3z" fill="#6a6a6a"/></svg>
<svg class="r" style="left:1811px;top:79px" width="35" height="35" viewBox="0 0 35 35"><circle cx="21.5" cy="13.25" r="10.8" fill="#fff" stroke="#417ebf" stroke-width="2.2"/><path d="M13.8 21L4 30.8" stroke="#417ebf" stroke-width="4.5" stroke-linecap="round"/></svg>
<div class="t" style="left:1806.60px;top:122.00px;font-size:15px;color:#444444;transform:scaleX(0.9781);">Find &amp;</div>
<div class="t" style="left:1803.70px;top:141.00px;font-size:15px;color:#444444;transform:scaleX(0.9329);">Select</div>
<svg class="r" style="left:1847px;top:148px" width="6" height="3" viewBox="0 0 6 3"><path d="M0 0h6l-3.0 3z" fill="#6a6a6a"/></svg>
<div class="t" style="left:1729.70px;top:165.00px;font-size:14px;color:#5f5f5f;transform:scaleX(0.9042);">Editing</div>
<svg class="r" style="left:1898px;top:168px" width="11" height="7" viewBox="0 0 11 7"><path d="M0.5 6L5.5 1l5 5" fill="none" stroke="#6a6a6a" stroke-width="1.4"/></svg>
<div class="r" style="left:0px;top:183px;width:1920px;height:54px;background:#e6e6e6;"></div>
<div class="r" style="left:6px;top:195px;width:127px;height:30px;background:#fff;border:1px solid #c6c6c6;box-sizing:border-box;"></div>
<div class="t" style="left:13.80px;top:203.00px;font-size:15px;color:#222;transform:scaleX(1.0109);">D13</div>
<svg class="r" style="left:117px;top:208px" width="7" height="3" viewBox="0 0 7 3"><path d="M0 0h7l-3.5 3z" fill="#6a6a6a"/></svg>
<div class="r" style="left:150px;top:203px;width:3px;height:3px;background:#9a9a9a;"></div>
<div class="r" style="left:150px;top:208px;width:3px;height:3px;background:#9a9a9a;"></div>
<div class="r" style="left:150px;top:213px;width:3px;height:3px;background:#9a9a9a;"></div>
<div class="r" style="left:170px;top:195px;width:137px;height:30px;background:#fff;border:1px solid #c6c6c6;box-sizing:border-box;"></div>
<svg class="r" style="left:185px;top:203px" width="16" height="15" viewBox="0 0 16 15"><path d="M1.5 1.5l13 12.5M14.5 1.5l-13 12.5" stroke="#c0c0c0" stroke-width="1.8"/></svg>
<svg class="r" style="left:229px;top:203px" width="19" height="16" viewBox="0 0 19 16"><path d="M1.5 8l6 6 10-12" fill="none" stroke="#c0c0c0" stroke-width="2.6"/></svg>
<div class="t" style="left:274.20px;top:199.00px;font-size:19px;color:#555;font-family:'Liberation Serif',serif;font-weight:normal;font-style:italic;transform:scaleX(1.4400);">f</div>
<div class="t" style="left:282.72px;top:203.00px;font-size:15px;color:#555;font-family:'Liberation Serif',serif;font-weight:normal;font-style:italic;transform:scaleX(1.1095);">x</div>
<div class="r" style="left:310px;top:195px;width:1604px;height:30px;background:#fff;border:1px solid #c6c6c6;box-sizing:border-box;"></div>
<svg class="r" style="left:1899px;top:207px" width="10" height="6" viewBox="0 0 10 6"><path d="M1 1l4 4 4-4" fill="none" stroke="#6a6a6a" stroke-width="1.8"/></svg>
<div class="r" style="left:0px;top:237px;width:1920px;height:267px;background:#e6e6e6;"></div>
<div class="r" style="left:35px;top:261px;width:1859px;height:243px;background:#fff;"></div>
<div class="r" style="left:756px;top:237px;width:211px;height:23px;background:#d2d2d2;"></div>
<div class="r" style="left:0px;top:260px;width:1894px;height:1px;background:#9b9b9b;"></div>
<div class="r" style="left:756px;top:259px;width:211px;height:2px;background:#217346;"></div>
<div class="r" style="left:34px;top:237px;width:1px;height:23px;background:#9b9b9b;"></div>
<div class="r" style="left:233px;top:237px;width:1px;height:23px;background:#9b9b9b;"></div>
<div class="r" style="left:443px;top:237px;width:1px;height:23px;background:#9b9b9b;"></div>
<div class="r" style="left:755px;top:237px;width:1px;height:23px;background:#9b9b9b;"></div>
<div class="r" style="left:967px;top:237px;width:1px;height:23px;background:#9b9b9b;"></div>
<div class="r" style="left:1177px;top:237px;width:1px;height:23px;background:#9b9b9b;"></div>
<div class="r" style="left:1513px;top:237px;width:1px;height:23px;background:#9b9b9b;"></div>
<div class="r" style="left:1825px;top:237px;width:1px;height:23px;background:#9b9b9b;"></div>
<div class="r" style="left:34px;top:237px;width:1px;height:267px;background:#9b9b9b;"></div>
<svg class="r" style="left:15px;top:241px" width="16" height="16" viewBox="0 0 16 16"><path d="M16 0V16H0z" fill="#b4b4b4"/></svg>
<div class="t" style="left:128.68px;top:242.00px;font-size:16px;color:#222;">A</div>
<div class="t" style="left:333.18px;top:242.00px;font-size:16px;color:#222;">B</div>
<div class="t" style="left:593.73px;top:242.00px;font-size:16px;color:#222;">C</div>
<div class="t" style="left:855.73px;top:242.00px;font-size:16px;color:#217346;">D</div>
<div class="t" style="left:1067.17px;top:242.00px;font-size:16px;color:#222;">E</div>
<div class="t" style="left:1340.62px;top:242.00px;font-size:16px;color:#222;">F</div>
<div class="t" style="left:1663.28px;top:242.00px;font-size:16px;color:#222;">G</div>
<div class="t" style="left:1860.52px;top:242.00px;font-size:16px;color:#222;">H</div>
<div class="r" style="left:35px;top:284px;width:1859px;height:1px;background:#d4d4d4;"></div>
<div class="r" style="left:0px;top:284px;width:34px;height:1px;background:#c8c8c8;"></div>
<div class="r" style="left:35px;top:308px;width:1859px;height:1px;background:#d4d4d4;"></div>
<div class="r" style="left:0px;top:308px;width:34px;height:1px;background:#c8c8c8;"></div>
<div class="r" style="left:35px;top:332px;width:1859px;height:1px;background:#d4d4d4;"></div>
<div class="r" style="left:0px;top:332px;width:34px;height:1px;background:#c8c8c8;"></div>
<div class="r" style="left:35px;top:356px;width:1859px;height:1px;background:#d4d4d4;"></div>
<div class="r" style="left:0px;top:356px;width:34px;height:1px;background:#c8c8c8;"></div>
<div class="r" style="left:35px;top:380px;width:1859px;height:1px;background:#d4d4d4;"></div>
<div class="r" style="left:0px;top:380px;width:34px;height:1px;background:#c8c8c8;"></div>
<div class="r" style="left:35px;top:404px;width:1859px;height:1px;background:#d4d4d4;"></div>
<div class="r" style="left:0px;top:404px;width:34px;height:1px;background:#c8c8c8;"></div>
<div class="r" style="left:35px;top:428px;width:1859px;height:1px;background:#d4d4d4;"></div>
<div class="r" style="left:0px;top:428px;width:34px;height:1px;background:#c8c8c8;"></div>
<div class="r" style="left:35px;top:452px;width:1859px;height:1px;background:#d4d4d4;"></div>
<div class="r" style="left:0px;top:452px;width:34px;height:1px;background:#c8c8c8;"></div>
<div class="r" style="left:35px;top:476px;width:1859px;height:1px;background:#d4d4d4;"></div>
<div class="r" style="left:0px;top:476px;width:34px;height:1px;background:#c8c8c8;"></div>
<div class="r" style="left:35px;top:500px;width:1859px;height:1px;background:#d4d4d4;"></div>
<div class="r" style="left:0px;top:500px;width:34px;height:1px;background:#c8c8c8;"></div>
<div class="r" style="left:35px;top:284px;width:1859px;height:1px;background:#9b9b9b;"></div>
<div class="r" style="left:233px;top:261px;width:1px;height:243px;background:#d4d4d4;"></div>
<div class="r" style="left:443px;top:261px;width:1px;height:243px;background:#d4d4d4;"></div>
<div class="r" style="left:755px;top:261px;width:1px;height:243px;background:#d4d4d4;"></div>
<div class="r" style="left:967px;top:261px;width:1px;height:243px;background:#d4d4d4;"></div>
<div class="r" style="left:1177px;top:261px;width:1px;height:243px;background:#d4d4d4;"></div>
<div class="r" style="left:1513px;top:261px;width:1px;height:243px;background:#d4d4d4;"></div>
<div class="r" style="left:1825px;top:261px;width:1px;height:243px;background:#d4d4d4;"></div>
<div class="r" style="left:1894px;top:261px;width:1px;height:243px;background:#9b9b9b;"></div>
<div class="t" style="left:13.05px;top:267.00px;font-size:16px;color:#222;">1</div>
<div class="t" style="left:13.05px;top:291.00px;font-size:16px;color:#222;">2</div>
<div class="t" style="left:13.05px;top:315.00px;font-size:16px;color:#222;">3</div>
<div class="t" style="left:13.05px;top:339.00px;font-size:16px;color:#222;">4</div>
<div class="t" style="left:13.05px;top:363.00px;font-size:16px;color:#222;">5</div>
<div class="t" style="left:13.05px;top:387.00px;font-size:16px;color:#222;">6</div>
<div class="t" style="left:13.05px;top:411.00px;font-size:16px;color:#222;">7</div>
<div class="t" style="left:13.05px;top:435.00px;font-size:16px;color:#222;">8</div>
<div class="t" style="left:13.05px;top:459.00px;font-size:16px;color:#222;">9</div>
<div class="t" style="left:8.60px;top:483.00px;font-size:16px;color:#222;">10</div>
<div class="r" style="left:1898px;top:239px;width:19px;height:19px;background:#fff;border:1px solid #c6c6c6;box-sizing:border-box;"></div>
<div class="r" style="left:1898px;top:259px;width:19px;height:250px;background:#fff;border:1px solid #c6c6c6;box-sizing:border-box;"></div>
<svg class="r" style="left:1903px;top:246px" width="9" height="5" viewBox="0 0 9 5"><path d="M0 4.5h9L4.5 0z" fill="#777"/></svg>
<div class="t" style="left:90.80px;top:266.00px;font-size:15px;color:#000;font-family:'Liberation Sans',sans-serif;font-weight:bold;font-style:normal;transform:scaleX(1.0202);">Süreç Kodu</div>
<div class="t" style="left:291.50px;top:266.00px;font-size:15px;color:#000;font-family:'Liberation Sans',sans-serif;font-weight:bold;font-style:normal;transform:scaleX(1.0311);">Revizyon No</div>
<div class="t" style="left:564.20px;top:266.00px;font-size:15px;color:#000;font-family:'Liberation Sans',sans-serif;font-weight:bold;font-style:normal;transform:scaleX(1.0151);">Süreç Adı</div>
<div class="t" style="left:813.00px;top:266.00px;font-size:15px;color:#000;font-family:'Liberation Sans',sans-serif;font-weight:bold;font-style:normal;transform:scaleX(1.0458);">Onaylayacak</div>
<div class="t" style="left:1026.00px;top:266.00px;font-size:15px;color:#000;font-family:'Liberation Sans',sans-serif;font-weight:bold;font-style:normal;transform:scaleX(1.0127);">Süreç Sahibi</div>
<div class="t" style="left:1252.10px;top:266.00px;font-size:15px;color:#000;font-family:'Liberation Sans',sans-serif;font-weight:bold;font-style:normal;transform:scaleX(1.0550);">Onaya Gönderilme Tarihi</div>
<div class="t" style="left:1585.00px;top:266.00px;font-size:15px;color:#000;font-family:'Liberation Sans',sans-serif;font-weight:bold;font-style:normal;transform:scaleX(1.0282);">Onayda Beklediği Süre</div>
<div class="t" style="left:38.20px;top:290.00px;font-size:15.5px;color:#000;transform:scaleX(0.9739);">05</div>
<div class="t" style="left:431.30px;top:290.00px;font-size:15.5px;color:#000;transform:scaleX(0.8372);">1</div>
<div class="t" style="left:448.00px;top:290.00px;font-size:15.5px;color:#000;transform:scaleX(0.9603);">ERMETAL SÜREÇ YÖNETİMİ</div>
<div class="t" style="left:759.40px;top:290.00px;font-size:15px;color:#000;transform:scaleX(1.0110);">Aslı Tascı</div>
<div class="t" style="left:1181.60px;top:290.00px;font-size:15.5px;color:#000;transform:scaleX(1.0759);">12/06/2019 10:39:24</div>
<div class="t" style="left:1517.20px;top:290.00px;font-size:15.5px;color:#000;transform:scaleX(1.0495);">13.03:06:50.2789267</div>
</body></html>
